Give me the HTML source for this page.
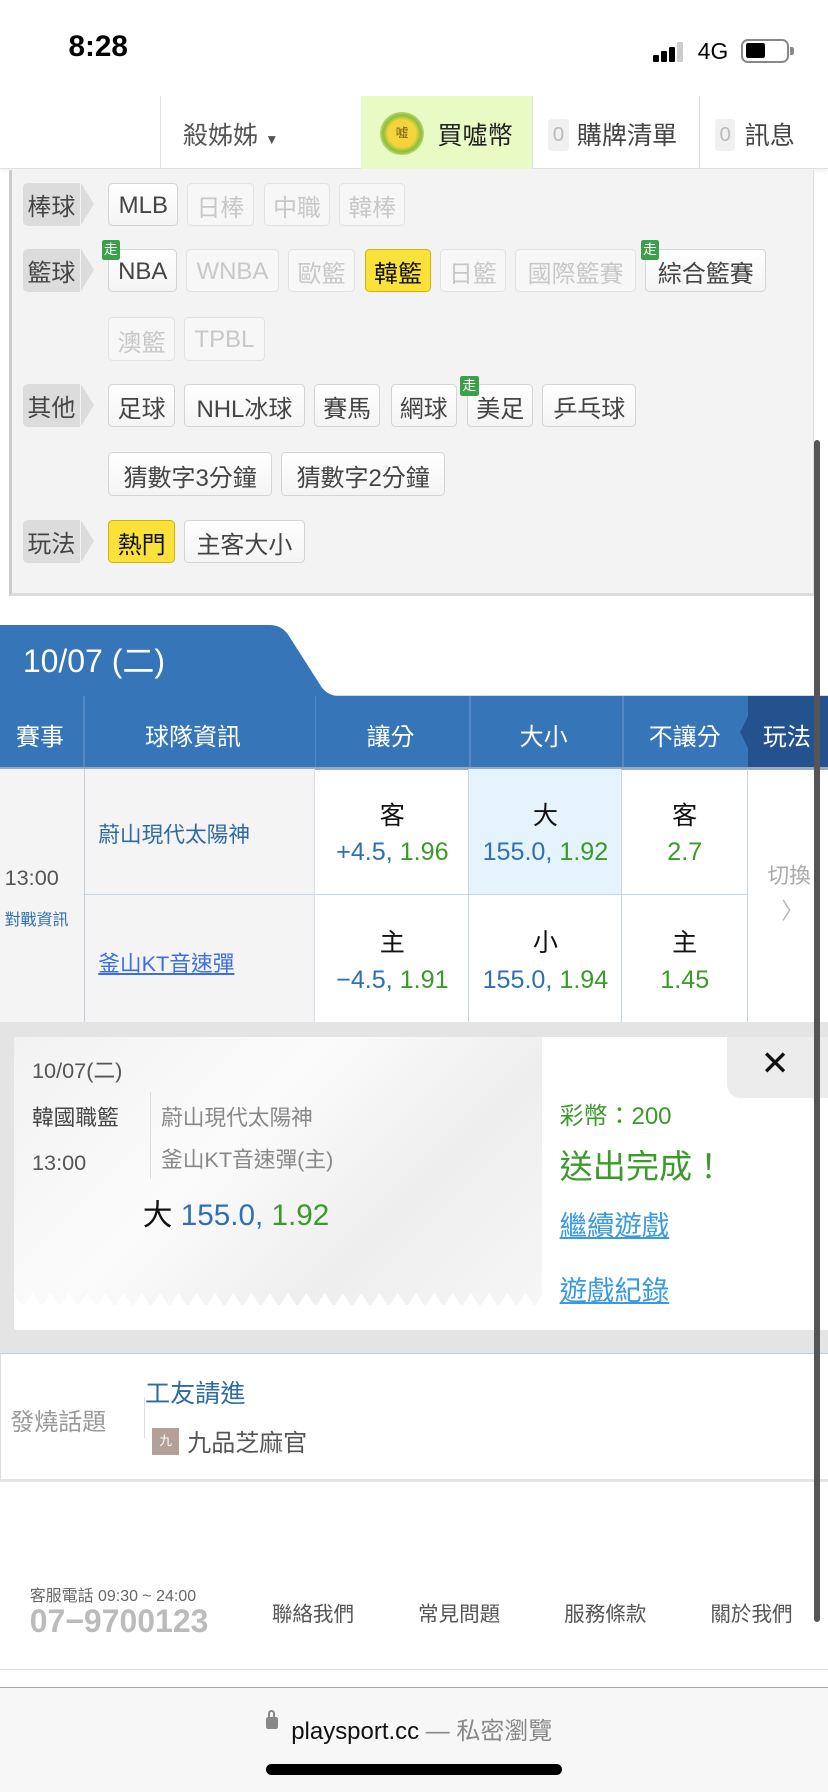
<!DOCTYPE html>
<html><head><meta charset="utf-8">
<style>
*{margin:0;padding:0;box-sizing:border-box}
html,body{width:828px;height:1792px;overflow:hidden;background:#fff}
#w{position:relative;width:725px;height:1569px;zoom:1.14207;font-family:"Liberation Sans","Noto Sans CJK TC",sans-serif;color:#333}
.a{position:absolute}
.b{position:absolute;height:38px;border:1px solid #d4d4d4;border-radius:4px;background:linear-gradient(#fff,#f4f4f4);display:flex;align-items:center;justify-content:center;font-size:21px;color:#444;padding-top:2px}
.b.d{color:#c8c8c8;background:#f7f7f7;border-color:#e2e2e2}
.b.y{background:#fbe23a;border-color:#d6b300;color:#111}
.lb{position:absolute;left:20px;width:50px;height:38px;background:#dcdcdc;border-radius:4px 0 0 4px;font-size:21px;color:#444;display:flex;align-items:center;padding-left:4px}
.lb:after{content:"";position:absolute;right:-12px;top:0;border-left:12px solid #dcdcdc;border-top:19px solid transparent;border-bottom:19px solid transparent}
.go{position:absolute;width:16px;height:18px;background:#3aa04a;color:#fff;font-size:12px;line-height:18px;text-align:center;border-radius:2px}
.c{position:absolute;display:flex;flex-direction:column;align-items:center;justify-content:center;gap:6px;font-size:22px;border-right:1px solid #c5d5e5;border-bottom:1px solid #c5d5e5}
.bl{color:#2f70b5}.gr{color:#3a9a2a}
</style></head><body><div id="w">
<div class="a" style="left:60px;top:26px;font-size:26px;font-weight:bold;color:#000">8:28</div>
<div class="a" style="left:572px;top:48px;width:5px;height:6px;background:#000;border-radius:1px"></div>
<div class="a" style="left:579px;top:45px;width:5px;height:9px;background:#000;border-radius:1px"></div>
<div class="a" style="left:586px;top:41px;width:5px;height:13px;background:#000;border-radius:1px"></div>
<div class="a" style="left:593px;top:37px;width:5px;height:17px;background:#ccc;border-radius:1px"></div>
<div class="a" style="left:611px;top:33px;font-size:20px;color:#000">4G</div>
<div class="a" style="left:649px;top:34px;width:42px;height:21px;border:2px solid #888;border-radius:6px"></div>
<div class="a" style="left:653px;top:38px;width:17px;height:13px;background:#000;border-radius:2px"></div>
<div class="a" style="left:692px;top:41px;width:3px;height:7px;background:#888;border-radius:0 2px 2px 0"></div>
<div class="a" style="left:0;top:84px;width:725px;height:64px;border-bottom:1px solid #e0e0e0;box-shadow:0 2px 3px rgba(0,0,0,.06)"></div>
<div class="a" style="left:140px;top:84px;width:1px;height:64px;background:#e0e0e0"></div>
<div class="a" style="left:160px;top:102px;font-size:22px;color:#555">殺姊姊 <span style="font-size:12px">▼</span></div>
<div class="a" style="left:316px;top:84px;width:150px;height:64px;background:#e9fbc4"></div>
<div class="a" style="left:333px;top:98px;width:38px;height:38px;border-radius:50%;background:radial-gradient(#f5d33a 45%,#8bbf3a 60%,#c9e08a 75%);font-size:11px;color:#6a5a10;text-align:center;line-height:38px">嘘</div>
<div class="a" style="left:383px;top:102px;font-size:22px;color:#222">買噓幣</div>
<div class="a" style="left:466px;top:84px;width:1px;height:64px;background:#e0e0e0"></div>
<div class="a" style="left:480px;top:104px;width:18px;height:28px;background:#f0f0f0;border-radius:3px;color:#bbb;font-size:18px;text-align:center;line-height:28px">0</div>
<div class="a" style="left:505px;top:102px;font-size:22px;color:#444">購牌清單</div>
<div class="a" style="left:612px;top:84px;width:1px;height:64px;background:#e0e0e0"></div>
<div class="a" style="left:626px;top:104px;width:18px;height:28px;background:#f0f0f0;border-radius:3px;color:#bbb;font-size:18px;text-align:center;line-height:28px">0</div>
<div class="a" style="left:652px;top:102px;font-size:22px;color:#444">訊息</div>
<div class="a" style="left:8px;top:149px;width:705px;height:373px;background:#f3f3f3;border-left:3px solid #ccc;border-bottom:3px solid #ddd;border-right:1px solid #ddd"></div>
<div class="lb" style="top:160px">棒球</div>
<div class="b" style="left:95px;top:160px;width:61px">MLB</div>
<div class="b d" style="left:164px;top:160px;width:58px">日棒</div>
<div class="b d" style="left:231px;top:160px;width:58px">中職</div>
<div class="b d" style="left:297px;top:160px;width:58px">韓棒</div>
<div class="lb" style="top:218px">籃球</div>
<div class="b" style="left:95px;top:218px;width:60px">NBA</div>
<div class="b d" style="left:163px;top:218px;width:81px">WNBA</div>
<div class="b d" style="left:252px;top:218px;width:59px">歐籃</div>
<div class="b y" style="left:320px;top:218px;width:57px">韓籃</div>
<div class="b d" style="left:385px;top:218px;width:58px">日籃</div>
<div class="b d" style="left:451px;top:218px;width:106px">國際籃賽</div>
<div class="b" style="left:565px;top:218px;width:106px">綜合籃賽</div>
<div class="go" style="left:89px;top:210px">走</div>
<div class="go" style="left:561px;top:210px">走</div>
<div class="b d" style="left:95px;top:278px;width:58px">澳籃</div>
<div class="b d" style="left:161px;top:278px;width:71px">TPBL</div>
<div class="lb" style="top:336px">其他</div>
<div class="b" style="left:95px;top:336px;width:58px">足球</div>
<div class="b" style="left:161px;top:336px;width:106px">NHL冰球</div>
<div class="b" style="left:275px;top:336px;width:58px">賽馬</div>
<div class="b" style="left:342px;top:336px;width:58px">網球</div>
<div class="b" style="left:409px;top:336px;width:58px">美足</div>
<div class="b" style="left:475px;top:336px;width:82px">乒乓球</div>
<div class="go" style="left:403px;top:329px">走</div>
<div class="b" style="left:95px;top:396px;width:143px">猜數字3分鐘</div>
<div class="b" style="left:246px;top:396px;width:144px">猜數字2分鐘</div>
<div class="lb" style="top:455px">玩法</div>
<div class="b y" style="left:95px;top:455px;width:58px">熱門</div>
<div class="b" style="left:161px;top:455px;width:106px">主客大小</div>
<svg class="a" style="left:0;top:547px" width="725" height="63"><path d="M0 0H236Q246 0 252 8L282 55Q288 62 296 62H725V63H0Z" fill="#3575b8"/></svg>
<div class="a" style="left:20px;top:557px;font-size:28px;color:#fff">10/07 (二)</div>
<div class="a" style="left:0;top:609px;width:725px;height:63px;background:#3575b8"></div>
<div class="a" style="left:655px;top:609px;width:70px;height:63px;background:#24528f"></div>
<svg class="a" style="left:647px;top:625px" width="10" height="32"><path d="M9 0L1 16L9 32Z" fill="#24528f"/></svg>
<div class="a" style="top:609px;left:0;width:725px;height:63px;font-size:21px;color:#fff">
<span class="a" style="left:14px;top:19px">賽事</span><span class="a" style="left:127px;top:19px">球隊資訊</span><span class="a" style="left:321px;top:19px">讓分</span><span class="a" style="left:455px;top:19px">大小</span><span class="a" style="left:568px;top:19px">不讓分</span><span class="a" style="left:668px;top:19px">玩法</span></div>
<div class="a" style="left:73px;top:609px;width:1px;height:63px;background:#5588c4"></div>
<div class="a" style="left:276px;top:609px;width:1px;height:63px;background:#5588c4"></div>
<div class="a" style="left:411px;top:609px;width:1px;height:63px;background:#5588c4"></div>
<div class="a" style="left:545px;top:609px;width:1px;height:63px;background:#5588c4"></div>
<div class="a" style="left:0;top:672px;width:725px;height:2px;background:#9ab"></div>
<div class="a" style="left:0;top:673px;width:74px;height:222px;background:#f4f4f4;border-right:1px solid #ccd"></div>
<div class="a" style="left:4px;top:757px;font-size:19px;color:#555">13:00</div>
<div class="a" style="left:4px;top:793px;font-size:14px;color:#2f70b5">對戰資訊</div>
<div class="a" style="left:74px;top:673px;width:202px;height:111px;background:#f4f4f4;border-bottom:1px solid #c5d5e5;border-right:1px solid #dde"></div>
<div class="a" style="left:74px;top:784px;width:202px;height:111px;background:#f4f4f4;border-right:1px solid #dde"></div>
<div class="a" style="left:86px;top:716px;font-size:19px;color:#2f6aa5">蔚山現代太陽神</div>
<div class="a" style="left:86px;top:829px;font-size:19px;color:#3a6fe0;text-decoration:underline">釜山KT音速彈</div>
<div class="c" style="left:277px;top:673px;width:134px;height:111px"><span style="color:#111">客</span><span><span class="bl">+4.5,</span> <span class="gr">1.96</span></span></div>
<div class="c" style="left:411px;top:673px;width:134px;height:111px;background:#e5f3fc"><span style="color:#111">大</span><span class="bl">155.0, <span class="gr">1.92</span></span></div>
<div class="c" style="left:545px;top:673px;width:110px;height:111px"><span style="color:#111">客</span><span class="gr">2.7</span></div>
<div class="c" style="left:277px;top:784px;width:134px;height:111px;border-bottom:0"><span style="color:#111">主</span><span><span class="bl">−4.5,</span> <span class="gr">1.91</span></span></div>
<div class="c" style="left:411px;top:784px;width:134px;height:111px;border-bottom:0"><span style="color:#111">小</span><span class="bl">155.0, <span class="gr">1.94</span></span></div>
<div class="c" style="left:545px;top:784px;width:110px;height:111px;border-bottom:0"><span style="color:#111">主</span><span class="gr">1.45</span></div>
<div class="a" style="left:672px;top:752px;font-size:19px;color:#aaa">切換</div>
<div class="a" style="left:684px;top:782px;font-size:20px;color:#bbb">〉</div>
<div class="a" style="left:0;top:895px;width:725px;height:290px;background:#e4e4e4"></div>
<div class="a" style="left:12px;top:908px;width:713px;height:257px;background:#fff"></div>
<div class="a" style="left:12px;top:908px;width:463px;height:235px;background:linear-gradient(135deg,#f2f2f2,#fbfbfb 40%,#eee 70%,#f6f6f6)"></div>
<svg class="a" style="left:12px;top:1132px" width="463" height="12"><path d="M0 12 L0 0 L8 12 L16 0 L24 12 L32 0 L40 12 L48 0 L56 12 L64 0 L72 12 L80 0 L88 12 L96 0 L104 12 L112 0 L120 12 L128 0 L136 12 L144 0 L152 12 L160 0 L168 12 L176 0 L184 12 L192 0 L200 12 L208 0 L216 12 L224 0 L232 12 L240 0 L248 12 L256 0 L264 12 L272 0 L280 12 L288 0 L296 12 L304 0 L312 12 L320 0 L328 12 L336 0 L344 12 L352 0 L360 12 L368 0 L376 12 L384 0 L392 12 L400 0 L408 12 L416 0 L424 12 L432 0 L440 12 L448 0 L456 12 L463 0 L463 12Z" fill="#fff"/></svg>
<div class="a" style="left:637px;top:908px;width:88px;height:53px;background:#ececec;border-bottom-left-radius:12px"></div>
<div class="a" style="left:666px;top:914px;font-size:30px;color:#111">✕</div>
<div class="a" style="left:28px;top:923px;font-size:19px;color:#555">10/07(二)</div>
<div class="a" style="left:28px;top:964px;font-size:19px;color:#444">韓國職籃</div>
<div class="a" style="left:28px;top:1007px;font-size:19px;color:#555">13:00</div>
<div class="a" style="left:131px;top:956px;width:1px;height:76px;background:#ddd"></div>
<div class="a" style="left:141px;top:964px;font-size:19px;color:#888">蔚山現代太陽神</div>
<div class="a" style="left:141px;top:1001px;font-size:19px;color:#888">釜山KT音速彈(主)</div>
<div class="a" style="left:125px;top:1043px;font-size:26px;color:#111">大 <span class="bl">155.0,</span> <span class="gr">1.92</span></div>
<div class="a" style="left:490px;top:960px;font-size:21px;color:#3a9a2a">彩幣：200</div>
<div class="a" style="left:490px;top:998px;font-size:29px;color:#3a9a2a">送出完成！</div>
<div class="a" style="left:490px;top:1053px;font-size:24px;color:#3a9ae0;text-decoration:underline">繼續遊戲</div>
<div class="a" style="left:490px;top:1110px;font-size:24px;color:#3a9ae0;text-decoration:underline">遊戲紀錄</div>
<div class="a" style="left:0;top:1185px;width:725px;height:113px;border-top:1px solid #b8d4ea;border-bottom:3px solid #e4e4e4;border-left:1px solid #ddd"></div>
<div class="a" style="left:9px;top:1228px;font-size:21px;color:#999">發燒話題</div>
<div class="a" style="left:126px;top:1223px;width:1px;height:36px;background:#ddd"></div>
<div class="a" style="left:127px;top:1203px;font-size:22px;color:#2f6aa5">工友請進</div>
<div class="a" style="left:133px;top:1250px;width:24px;height:24px;background:#b4a096;color:#fff;font-size:11px;text-align:center;line-height:24px">九</div>
<div class="a" style="left:164px;top:1246px;font-size:21px;color:#555">九品芝麻官</div>
<div class="a" style="left:26px;top:1385px;font-size:14px;color:#666">客服電話 09:30 ~ 24:00</div>
<div class="a" style="left:26px;top:1404px;font-size:28px;color:#bbb;font-weight:bold">07−9700123</div>
<div class="a" style="left:238px;top:1398px;font-size:18px;color:#555">聯絡我們</div>
<div class="a" style="left:366px;top:1398px;font-size:18px;color:#555">常見問題</div>
<div class="a" style="left:494px;top:1398px;font-size:18px;color:#555">服務條款</div>
<div class="a" style="left:622px;top:1398px;font-size:18px;color:#555">關於我們</div>
<div class="a" style="left:0;top:1461px;width:725px;height:1px;background:#ddd"></div>
<div class="a" style="left:0;top:1477px;width:725px;height:92px;background:#f7f7f7;border-top:1px solid #aaa"></div>
<div class="a" style="left:233px;top:1503px;width:10px;height:11px;background:#888;border-radius:2px"></div>
<div class="a" style="left:235px;top:1497px;width:6px;height:8px;border:2px solid #888;border-bottom:0;border-radius:3px 3px 0 0"></div>
<div class="a" style="left:255px;top:1498px;font-size:21px;color:#111">playsport.cc <span style="color:#888">— 私密瀏覽</span></div>
<div class="a" style="left:233px;top:1545px;width:259px;height:9px;background:#000;border-radius:5px"></div>
<div class="a" style="left:713px;top:385px;width:5px;height:1035px;background:#555;border-radius:3px"></div>
</div></body></html>
